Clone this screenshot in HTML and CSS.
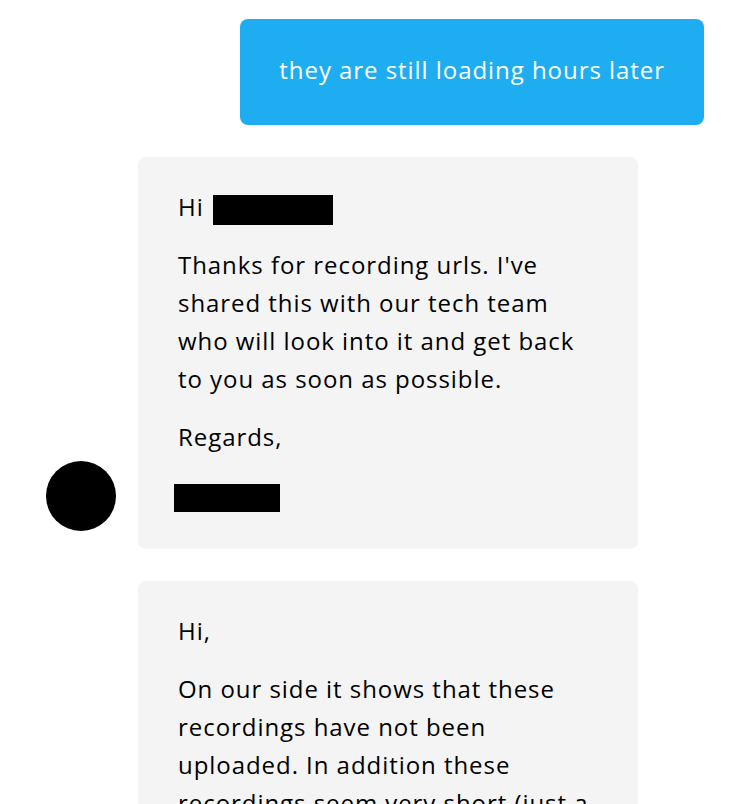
FILE: index.html
```html
<!DOCTYPE html>
<html>
    <head>
        <meta charset="UTF-8">
        <meta name="viewport" content="width=device-width, initial-scale=1.0">
        <title>Conversation</title>
        <link rel="stylesheet" href="styles.css">
    </head>

    <body>
        <div class="thread">
            <div class="row row-out">
                <div class="bubble bubble-out">they are still loading hours later</div>
            </div>

            <div class="row row-in">
                <div class="avatar"></div>
                <div class="bubble bubble-in">
                    <p>Hi <span class="redact redact-name"></span></p>
                    <p>Thanks for recording urls. I've shared this with our tech team who will look into it and get back to you as soon as possible.</p>
                    <p>Regards,</p>
                    <p><span class="redact redact-sign"></span></p>
                </div>
            </div>

            <div class="row row-in">
                <div class="avatar-space"></div>
                <div class="bubble bubble-in">
                    <p>Hi,</p>
                    <p>On our side it shows that these recordings have not been uploaded. In addition these recordings seem very short (just a few seconds) so please check them again.</p>
                </div>
            </div>
        </div>
    </body>
</html>
```

FILE: styles.css
```css
body {
    margin: 0;
    font-family: "Open Sans", "Noto Sans", sans-serif;
    font-size: 24px;
    letter-spacing: 0.95px;
    color: #000;
    background-color: #fff;
}
.thread {
    display: flex;
    flex-direction: column;
    gap: 32px;
    padding: 19px 45px 40px 46px;
}
.row {
    display: flex;
    align-items: flex-end;
}
.row-out {
    justify-content: flex-end;
}
.bubble {
    border-radius: 8px;
    line-height: 38px;
}
.bubble-out {
    padding: 32px 39px 36px 39px;
    background-color: #1fadf2;
    color: #fff;
}
.bubble-in {
    width: 500px;
    box-sizing: border-box;
    padding: 31px 40px 35px 40px;
    background-color: #f4f4f4;
}
.bubble-in p {
    margin: 0 0 20px 0;
}
.bubble-in p:last-child {
    margin-bottom: 0;
}
.avatar {
    width: 70px;
    height: 70px;
    margin: 0 22px 18px 0;
    border-radius: 50%;
    background-color: #000;
    flex-shrink: 0;
}
.avatar-space {
    width: 92px;
    flex-shrink: 0;
}
.redact {
    display: inline-block;
    background-color: #000;
    vertical-align: middle;
}
.redact-name {
    width: 120px;
    height: 30px;
    margin-left: 2px;
}
.redact-sign {
    width: 106px;
    height: 28px;
    margin-left: -4px;
}
```
